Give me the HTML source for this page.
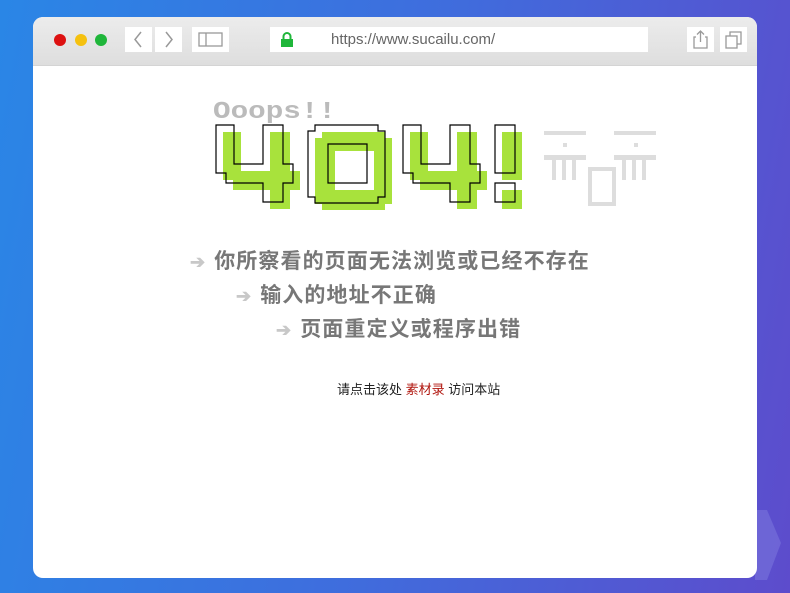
<!DOCTYPE html>
<html><head><meta charset="utf-8"><style>
html,body{margin:0;padding:0;width:790px;height:593px;overflow:hidden}
body{background:linear-gradient(100deg,#2a86e6 0%,#3f6ddd 50%,#5d4ccc 100%);position:relative;font-family:"Liberation Sans","Noto Sans CJK SC",sans-serif}
.win{position:absolute;left:33px;top:17px;width:724px;height:561px;background:#fff;border-radius:10px;overflow:hidden}
.bar{position:absolute;left:0;top:0;width:724px;height:48px;background:linear-gradient(#ececec,#dedede);border-bottom:1px solid #d4d4d4}
.dot{position:absolute;top:17px;width:12px;height:12px;border-radius:50%}
.btn{position:absolute;top:10px;height:25px;background:#fff}
.url{position:absolute;left:237px;top:10px;width:378px;height:25px;background:#fff;color:#666;font-size:15px;line-height:25px}
.line{position:absolute;color:#777;font-weight:bold;font-size:21px;white-space:nowrap;letter-spacing:1.1px}
.arr{color:#c8c8c8;font-size:18px;margin-right:8px}
</style></head><body>
<svg style="position:absolute;left:755px;top:505px" width="30" height="80"><polygon points="0,5 12,5 26,38 12,75 0,75" fill="#7a74dc" opacity="0.6"/></svg>
<div class="win">
 <div class="bar">
  <div class="dot" style="left:21px;background:#dd1111"></div>
  <div class="dot" style="left:42px;background:#f5c10f"></div>
  <div class="dot" style="left:62px;background:#1fb63a"></div>
  <div class="btn" style="left:92px;width:27px"><svg width="27" height="25"><path d="M16 5 L10 12.5 L16 20" fill="none" stroke="#999" stroke-width="1.5"/></svg></div>
  <div class="btn" style="left:122px;width:27px"><svg width="27" height="25"><path d="M11 5 L17 12.5 L11 20" fill="none" stroke="#999" stroke-width="1.5"/></svg></div>
  <div class="btn" style="left:159px;width:37px"><svg width="37" height="25"><rect x="7" y="6" width="23" height="13" fill="none" stroke="#999" stroke-width="1.3"/><line x1="14" y1="6" x2="14" y2="19" stroke="#999" stroke-width="1.3"/></svg></div>
  <div class="url"><svg style="position:absolute;left:10px;top:5px" width="14" height="15"><path d="M3.5 7 V4.5 a3.5 3.5 0 0 1 7 0 V7" fill="none" stroke="#1fb63a" stroke-width="2"/><rect x="1" y="7" width="12" height="8" fill="#1fb63a"/></svg><span style="position:absolute;left:61px">https://www.sucailu.com/</span></div>
  <div class="btn" style="left:654px;width:27px"><svg width="27" height="25"><path d="M9 10 H7 V21 H20 V10 H18 M13.5 4 V15 M10 7.5 L13.5 4 L17 7.5" fill="none" stroke="#999" stroke-width="1.3"/></svg></div>
  <div class="btn" style="left:687px;width:27px"><svg width="27" height="25"><rect x="6" y="9" width="11" height="12" fill="none" stroke="#999" stroke-width="1.3"/><path d="M10 9 V5 H21 V17 H17" fill="none" stroke="#999" stroke-width="1.3"/></svg></div>
 </div>
</div>
<svg style="position:absolute;left:0;top:0" width="790" height="593">
 <text x="213" y="118" font-family="Liberation Mono" font-weight="bold" font-size="24" fill="#bbb" textLength="123" lengthAdjust="spacingAndGlyphs">Ooops!!</text>
 <defs>
  <path id="four" d="M216 125 H234 V164 H263 V125 H283 V164 H293 V183 H283 V202 H263 V183 H226 V173 H216 Z"/>
  <path id="zero" fill-rule="evenodd" d="M315 125 H378 V131 H385 V197 H378 V203 H315 V197 H308 V131 H315 Z M328 144 V183 H367 V144 Z"/>
  <path id="ex" d="M495 125 H515 V173 H495 Z M495 183 H515 V202 H495 Z"/>
 </defs>
 <g fill="#a8e23c" transform="translate(7,7)">
  <use href="#four"/><use href="#zero"/><use href="#four" transform="translate(187,0)"/><use href="#ex"/>
 </g>
 <g fill="none" stroke="#000" stroke-width="1.2">
  <use href="#four"/><use href="#zero"/><use href="#four" transform="translate(187,0)"/><use href="#ex"/>
 </g>
 <g fill="#ddd">
  <rect x="544" y="131" width="42" height="4"/><rect x="563" y="143" width="4" height="4"/><rect x="544" y="155" width="42" height="5"/>
  <rect x="552" y="160" width="4" height="20"/><rect x="562" y="160" width="4" height="20"/><rect x="572" y="160" width="4" height="20"/>
  <rect x="614" y="131" width="42" height="4"/><rect x="634" y="143" width="4" height="4"/><rect x="614" y="155" width="42" height="5"/>
  <rect x="622" y="160" width="4" height="20"/><rect x="632" y="160" width="4" height="20"/><rect x="642" y="160" width="4" height="20"/>
 </g>
 <rect x="590" y="169" width="24" height="35" fill="none" stroke="#ddd" stroke-width="4"/>
</svg>
<div class="line" style="left:190px;top:245px"><span class="arr">➔</span>你所察看的页面无法浏览或已经不存在</div>
<div class="line" style="left:236px;top:279px"><span class="arr">➔</span>输入的地址不正确</div>
<div class="line" style="left:276px;top:313px"><span class="arr">➔</span>页面重定义或程序出错</div>
<div style="position:absolute;left:337px;top:379px;font-size:13px;color:#222;white-space:nowrap">请点击该处 <span style="color:#b0140c">素材录</span> 访问本站</div>
</body></html>
